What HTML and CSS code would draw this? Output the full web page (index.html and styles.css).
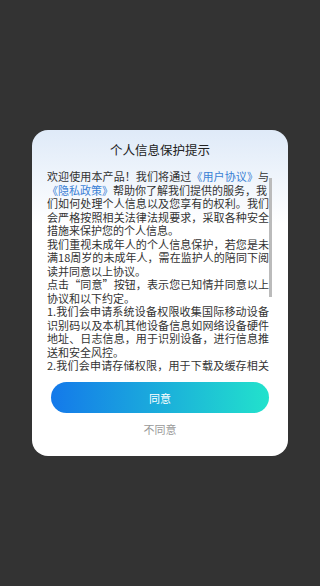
FILE: index.html
```html
<!DOCTYPE html>
<html lang="zh-CN">

<head>
    <meta charset="UTF-8">
    <meta name="viewport" content="width=device-width, initial-scale=1.0">
    <title>个人信息保护提示</title>
    <link rel="stylesheet" href="styles.css">
</head>

<body>
    <div class="dialog">
        <h2 class="dialog-title">个人信息保护提示</h2>
        <div class="dialog-scroll">
            <div class="dialog-body" id="terms">
                <p>欢迎使用本产品！我们将通过<a href="#">《用户协议》</a>与<a href="#">《隐私政策》</a>帮助你了解我们提供的服务，我<br>们如何处理个人信息以及您享有的权利。我们会严格按照相关法律法规要求，采取各种安全措施来保护您的个人信息。</p>
                <p>我们重视未成年人的个人信息保护，若您是未满18周岁的未成年人，需在监护人的陪同下阅读并同意以上协议。</p>
                <p>点击“同意”按钮，表示您已知情并同意以上协议和以下约定。</p>
                <p>1.我们会申请系统设备权限收集国际移动设备识别码以及本机其他设备信息如网络设备硬件地址、日志信息，用于识别设备，进行信息推送和安全风控。</p>
                <p>2.我们会申请存储权限，用于下载及缓存相关文件，以便为您提供更流畅的使用体验。</p>
                <p>3.上述权限以及摄像头、麦克风、相册等敏感权限均不会默认开启，只有经过您的明示授权才会在为实现功能或服务时使用。</p>
            </div>
            <!-- thin scroll indicator, the native one is hidden -->
            <div class="scroll-thumb"></div>
        </div>
        <button class="btn-agree">同意</button>
        <button class="btn-disagree">不同意</button>
    </div>
</body>

</html>
```

FILE: styles.css
```css
body {
    font-family: "Noto Sans CJK SC", "Noto Sans", sans-serif;
    display: flex;
    justify-content: center;
    align-items: center;
    height: 100vh;
    margin: 0;
    background: #333333;
    color: #222;
}

.dialog {
    width: 256px;
    box-sizing: border-box;
    padding: 10px 0 19px;
    border-radius: 16px;
    background: linear-gradient(to bottom, #dfeaf8, #ffffff 95px);
    display: flex;
    flex-direction: column;
    align-items: center;
}

.dialog-title {
    margin: 0;
    font-size: 12.5px;
    font-weight: normal;
    line-height: 20px;
    color: #222;
}

.dialog-scroll {
    position: relative;
    margin: 10px 16px 0 15px;
    align-self: stretch;
}

.dialog-body {
    height: 202px;
    overflow-y: scroll;
    scrollbar-width: none;
    padding-right: 3px;
    font-size: 11px;
    line-height: 13.5px;
    color: #333;
    text-align: justify;
}

.dialog-body::-webkit-scrollbar {
    display: none;
}

.dialog-body p {
    margin: 0;
}

.dialog-body a {
    color: #3a7fd5;
    text-decoration: none;
}

.scroll-thumb {
    position: absolute;
    top: 8px;
    right: 0;
    width: 3px;
    height: 119px;
    background: #bbbbbb;
}

.btn-agree {
    margin-top: 10px;
    width: 218px;
    height: 31px;
    border: none;
    border-radius: 16px;
    background: linear-gradient(to right, #1479ea, #22e2cc);
    color: white;
    font-family: inherit;
    font-size: 11px;
    cursor: pointer;
}

.btn-disagree {
    margin-top: 8px;
    padding: 0;
    border: none;
    background: none;
    color: #999;
    font-family: inherit;
    font-size: 11px;
    line-height: 16px;
    cursor: pointer;
}
```
